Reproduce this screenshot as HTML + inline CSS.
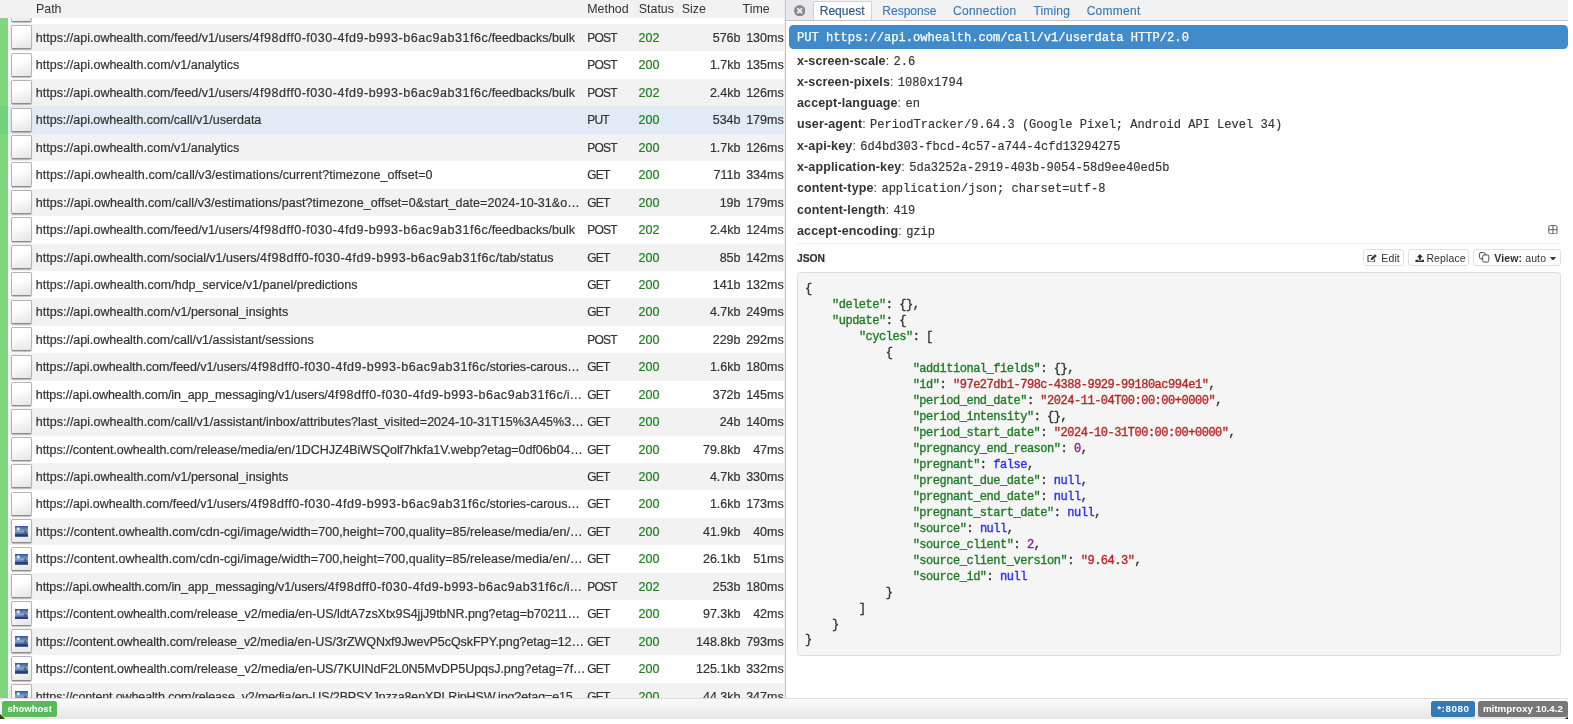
<!DOCTYPE html>
<html lang="en"><head><meta charset="utf-8"><title>mitmproxy</title>
<style>
*{box-sizing:border-box}
html,body{margin:0;padding:0}
body{width:1573px;height:724px;overflow:hidden;background:#fff;font-family:"Liberation Sans",sans-serif;color:#333;position:relative}
#app{position:absolute;left:0;top:0;width:1568.3px;height:718.8px;overflow:hidden;background:#fff;will-change:transform;transform:translateZ(0)}
#left{position:absolute;left:0;top:0;width:784.4px;height:698.6px;overflow:hidden;background:#fff}
#thead{position:absolute;left:0;top:0;width:100%;height:17.8px;background:#f2f2f2;font-size:12.4px;line-height:17.8px;z-index:3}
#thead span{position:absolute;top:1px;white-space:nowrap}
#rows{position:absolute;left:0;top:-3.44px;width:100%;-webkit-text-stroke:.2px}
.r{position:relative;height:27.44px;width:100%;border-left:8px solid #7ed67e;font-size:12.5px;line-height:27.44px;white-space:nowrap;background:#fff}
.r.g{background:#f2f2f2}
.r.sel{background:#e0ebf5;border-left-color:#72d17c}
.r>*{position:absolute;top:1px}
.ic{left:3.2px;top:1.3px!important;width:20.5px;height:24.2px;border:1px solid #b4b4b4;border-bottom-color:#8c8c8c;border-radius:2px;background:linear-gradient(160deg,#fff 0%,#fff 35%,#e4e4e4 100%);box-shadow:0 1px 1px rgba(0,0,0,.25)}
.pic{position:absolute;left:2.4px;top:6.1px;width:13.8px;height:10.8px;display:block}
.p{left:27.8px;width:552px;overflow:hidden}
.p u{text-decoration:none;letter-spacing:.53px}
.m{left:579.2px;font-size:12px;letter-spacing:-.75px}
.s{left:630.6px;color:#1b7d1b}
.z{right:43.9px;text-align:right}
.t{right:.7px;text-align:right}
#split{position:absolute;left:784px;top:0;width:3px;height:698.6px;background:linear-gradient(90deg,#f0f0f0 0,#f0f0f0 33.3%,#c4c4c4 33.3%,#c4c4c4 66.6%,#ededed 66.6%)}
#right{position:absolute;left:786px;top:0;width:782.3px;height:698.6px;background:#fff;overflow:hidden}
#nav{position:absolute;left:0;top:0;width:100%;height:20.9px;background:#f2f2f2;border-bottom:1px solid #c4c4c4;font-size:12px;line-height:16px}
#nav span{position:absolute;top:2.6px;color:#3a7ab8;white-space:nowrap;-webkit-text-stroke:.15px}
#cbg{position:absolute;left:0;top:0;width:27.2px;height:20px;background:#e9e9ed}
#nav .act{top:1.3px;left:27.2px;width:58.8px;height:18.7px;background:#fff;border:1px solid #d0d0d0;border-bottom:none;border-radius:1.5px 1.5px 0 0;color:#2c557f;padding:.3px 0 0 5.6px}
#close{position:absolute;left:8px;top:5.1px;width:11.4px;height:11.4px}
#first{position:absolute;left:2.9px;top:25.1px;width:779.4px;height:24px;background:#428bca;border-radius:4.5px;color:#fff;font:12.1px/24px "Liberation Mono",monospace;padding:.9px 0 0 8.1px;white-space:pre;-webkit-text-stroke:.25px}
.h{position:absolute;left:11px;white-space:nowrap;font-size:12.5px;line-height:20px;height:20px}
.h b{letter-spacing:.13px}
.h i{font:normal 12.05px "Liberation Mono",monospace;margin-left:.9px;-webkit-text-stroke:.15px}
#plus{position:absolute;left:762.3px;top:224.7px;width:9.8px;height:9.4px}
#hr{position:absolute;left:11px;top:243px;width:764.3px;height:1px;background:#eee}
#json{position:absolute;left:11px;top:250.8px;font-size:10.3px;line-height:16px;font-weight:bold;-webkit-text-stroke:.2px}
.btn{position:absolute;top:248.8px;height:17.6px;letter-spacing:.12px;border:1px solid #e0e0e0;border-radius:3px;background:#fff;font-size:10.5px;line-height:17.6px;white-space:nowrap;color:#333}
.btn svg{position:absolute}
.btn span{position:absolute;top:-.2px}
#pre{position:absolute;left:10.6px;top:272.2px;width:764.7px;height:383.4px;background:#f5f5f5;border:1px solid #dcdcdc;border-radius:3.5px;margin:0;padding:9.3px 0 0 7.5px;-webkit-text-stroke:.35px;letter-spacing:-.48px;font:12px/15.95px "Liberation Mono",monospace;color:#333;white-space:pre;overflow:hidden}
#pre .k{color:#1f7a26}
#pre .st{color:#b42828}
#pre .n{color:#86208f}
#pre .kw{color:#2b2bff}
#foot{position:absolute;left:0;top:698px;width:100%;height:20.8px;background:linear-gradient(#fafafa,#e6e6e6);border-top:1px solid #dedede}
.lab{position:absolute;top:2.4px;height:15.5px;border-radius:2.5px;color:#fff;font-weight:bold;font-size:9.8px;line-height:15.5px;text-align:center;white-space:nowrap}
</style></head>
<body>
<div id="app">
<svg width="0" height="0" style="position:absolute"><defs><linearGradient id="sky" x1="0" y1="0" x2="0" y2="1"><stop offset="0" stop-color="#2f55a0"/><stop offset=".5" stop-color="#8aa6cf"/><stop offset=".7" stop-color="#5674a8"/><stop offset=".8" stop-color="#1f3c78"/><stop offset="1" stop-color="#27437e"/></linearGradient></defs></svg>
<div id="left">
<div id="thead"><span style="left:36px">Path</span><span style="left:587.3px">Method</span><span style="left:638.8px">Status</span><span style="left:681.8px">Size</span><span style="left:742.6px">Time</span></div>
<div id="rows">
<div class="r"><div class="ic"></div></div>
<div class="r g"><div class="ic"></div><div class="p" style="letter-spacing:-0.003px">https://api.owhealth.com/feed/v1/users/<u>4f98dff0-f030-4fd9-b993-b6ac9ab31f6c</u>/feedbacks/bulk</div><div class="m">POST</div><div class="s">202</div><div class="z">576b</div><div class="t">130ms</div></div>
<div class="r"><div class="ic"></div><div class="p" style="letter-spacing:-0.002px">https://api.owhealth.com/v1/analytics</div><div class="m">POST</div><div class="s">200</div><div class="z">1.7kb</div><div class="t">135ms</div></div>
<div class="r g"><div class="ic"></div><div class="p" style="letter-spacing:-0.003px">https://api.owhealth.com/feed/v1/users/<u>4f98dff0-f030-4fd9-b993-b6ac9ab31f6c</u>/feedbacks/bulk</div><div class="m">POST</div><div class="s">202</div><div class="z">2.4kb</div><div class="t">126ms</div></div>
<div class="r sel"><div class="ic"></div><div class="p" style="letter-spacing:-0.008px">https://api.owhealth.com/call/v1/userdata</div><div class="m">PUT</div><div class="s">200</div><div class="z">534b</div><div class="t">179ms</div></div>
<div class="r g"><div class="ic"></div><div class="p" style="letter-spacing:-0.002px">https://api.owhealth.com/v1/analytics</div><div class="m">POST</div><div class="s">200</div><div class="z">1.7kb</div><div class="t">126ms</div></div>
<div class="r"><div class="ic"></div><div class="p" style="letter-spacing:0.069px">https://api.owhealth.com/call/v3/estimations/current?timezone_offset=0</div><div class="m">GET</div><div class="s">200</div><div class="z">711b</div><div class="t">334ms</div></div>
<div class="r g"><div class="ic"></div><div class="p" style="letter-spacing:0.047px">https://api.owhealth.com/call/v3/estimations/past?timezone_offset=0&amp;start_date=2024-10-31&amp;o…</div><div class="m">GET</div><div class="s">200</div><div class="z">19b</div><div class="t">179ms</div></div>
<div class="r"><div class="ic"></div><div class="p" style="letter-spacing:-0.003px">https://api.owhealth.com/feed/v1/users/<u>4f98dff0-f030-4fd9-b993-b6ac9ab31f6c</u>/feedbacks/bulk</div><div class="m">POST</div><div class="s">202</div><div class="z">2.4kb</div><div class="t">124ms</div></div>
<div class="r g"><div class="ic"></div><div class="p" style="letter-spacing:-0.004px">https://api.owhealth.com/social/v1/users/<u>4f98dff0-f030-4fd9-b993-b6ac9ab31f6c</u>/tab/status</div><div class="m">GET</div><div class="s">200</div><div class="z">85b</div><div class="t">142ms</div></div>
<div class="r"><div class="ic"></div><div class="p" style="letter-spacing:0.024px">https://api.owhealth.com/hdp_service/v1/panel/predictions</div><div class="m">GET</div><div class="s">200</div><div class="z">141b</div><div class="t">132ms</div></div>
<div class="r g"><div class="ic"></div><div class="p" style="letter-spacing:0.006px">https://api.owhealth.com/v1/personal_insights</div><div class="m">GET</div><div class="s">200</div><div class="z">4.7kb</div><div class="t">249ms</div></div>
<div class="r"><div class="ic"></div><div class="p" style="letter-spacing:-0.014px">https://api.owhealth.com/call/v1/assistant/sessions</div><div class="m">POST</div><div class="s">200</div><div class="z">229b</div><div class="t">292ms</div></div>
<div class="r g"><div class="ic"></div><div class="p" style="letter-spacing:-0.054px">https://api.owhealth.com/feed/v1/users/<u>4f98dff0-f030-4fd9-b993-b6ac9ab31f6c</u>/stories-carous…</div><div class="m">GET</div><div class="s">200</div><div class="z">1.6kb</div><div class="t">180ms</div></div>
<div class="r"><div class="ic"></div><div class="p" style="letter-spacing:-0.109px">https://api.owhealth.com/in_app_messaging/v1/users/<u>4f98dff0-f030-4fd9-b993-b6ac9ab31f6c</u>/i…</div><div class="m">GET</div><div class="s">200</div><div class="z">372b</div><div class="t">145ms</div></div>
<div class="r g"><div class="ic"></div><div class="p" style="letter-spacing:0.007px">https://api.owhealth.com/call/v1/assistant/inbox/attributes?last_visited=2024-10-31T15%3A45%3…</div><div class="m">GET</div><div class="s">200</div><div class="z">24b</div><div class="t">140ms</div></div>
<div class="r"><div class="ic"></div><div class="p" style="letter-spacing:-0.062px">https://content.owhealth.com/release/media/en/1DCHJZ4BiWSQolf7hkfa1V.webp?etag=0df06b04…</div><div class="m">GET</div><div class="s">200</div><div class="z">79.8kb</div><div class="t">47ms</div></div>
<div class="r g"><div class="ic"></div><div class="p" style="letter-spacing:0.006px">https://api.owhealth.com/v1/personal_insights</div><div class="m">GET</div><div class="s">200</div><div class="z">4.7kb</div><div class="t">330ms</div></div>
<div class="r"><div class="ic"></div><div class="p" style="letter-spacing:-0.054px">https://api.owhealth.com/feed/v1/users/<u>4f98dff0-f030-4fd9-b993-b6ac9ab31f6c</u>/stories-carous…</div><div class="m">GET</div><div class="s">200</div><div class="z">1.6kb</div><div class="t">173ms</div></div>
<div class="r g"><div class="ic"><svg class="pic" viewBox="0 0 14 11" preserveAspectRatio="none"><rect width="14" height="11" fill="url(#sky)"/><circle cx="3.3" cy="2.9" r="1.6" fill="#e9e8b8"/><path d="M8.1 7.7 L10.7 3.7 L12.5 7.7 Z" fill="#555a66"/></svg></div><div class="p" style="letter-spacing:0.041px">https://content.owhealth.com/cdn-cgi/image/width=700,height=700,quality=85/release/media/en/…</div><div class="m">GET</div><div class="s">200</div><div class="z">41.9kb</div><div class="t">40ms</div></div>
<div class="r"><div class="ic"><svg class="pic" viewBox="0 0 14 11" preserveAspectRatio="none"><rect width="14" height="11" fill="url(#sky)"/><circle cx="3.3" cy="2.9" r="1.6" fill="#e9e8b8"/><path d="M8.1 7.7 L10.7 3.7 L12.5 7.7 Z" fill="#555a66"/></svg></div><div class="p" style="letter-spacing:0.041px">https://content.owhealth.com/cdn-cgi/image/width=700,height=700,quality=85/release/media/en/…</div><div class="m">GET</div><div class="s">200</div><div class="z">26.1kb</div><div class="t">51ms</div></div>
<div class="r g"><div class="ic"></div><div class="p" style="letter-spacing:-0.107px">https://api.owhealth.com/in_app_messaging/v1/users/<u>4f98dff0-f030-4fd9-b993-b6ac9ab31f6c</u>/i…</div><div class="m">POST</div><div class="s">202</div><div class="z">253b</div><div class="t">180ms</div></div>
<div class="r"><div class="ic"><svg class="pic" viewBox="0 0 14 11" preserveAspectRatio="none"><rect width="14" height="11" fill="url(#sky)"/><circle cx="3.3" cy="2.9" r="1.6" fill="#e9e8b8"/><path d="M8.1 7.7 L10.7 3.7 L12.5 7.7 Z" fill="#555a66"/></svg></div><div class="p" style="letter-spacing:-0.048px">https://content.owhealth.com/release_v2/media/en-US/ldtA7zsXtx9S4jjJ9tbNR.png?etag=b70211…</div><div class="m">GET</div><div class="s">200</div><div class="z">97.3kb</div><div class="t">42ms</div></div>
<div class="r g"><div class="ic"><svg class="pic" viewBox="0 0 14 11" preserveAspectRatio="none"><rect width="14" height="11" fill="url(#sky)"/><circle cx="3.3" cy="2.9" r="1.6" fill="#e9e8b8"/><path d="M8.1 7.7 L10.7 3.7 L12.5 7.7 Z" fill="#555a66"/></svg></div><div class="p" style="letter-spacing:-0.066px">https://content.owhealth.com/release_v2/media/en-US/3rZWQNxf9JwevP5cQskFPY.png?etag=12…</div><div class="m">GET</div><div class="s">200</div><div class="z">148.8kb</div><div class="t">793ms</div></div>
<div class="r"><div class="ic"><svg class="pic" viewBox="0 0 14 11" preserveAspectRatio="none"><rect width="14" height="11" fill="url(#sky)"/><circle cx="3.3" cy="2.9" r="1.6" fill="#e9e8b8"/><path d="M8.1 7.7 L10.7 3.7 L12.5 7.7 Z" fill="#555a66"/></svg></div><div class="p" style="letter-spacing:-0.050px">https://content.owhealth.com/release_v2/media/en-US/7KUINdF2L0N5MvDP5UpqsJ.png?etag=7f…</div><div class="m">GET</div><div class="s">200</div><div class="z">125.1kb</div><div class="t">332ms</div></div>
<div class="r g"><div class="ic"><svg class="pic" viewBox="0 0 14 11" preserveAspectRatio="none"><rect width="14" height="11" fill="url(#sky)"/><circle cx="3.3" cy="2.9" r="1.6" fill="#e9e8b8"/><path d="M8.1 7.7 L10.7 3.7 L12.5 7.7 Z" fill="#555a66"/></svg></div><div class="p" style="letter-spacing:-0.127px">https://content.owhealth.com/release_v2/media/en-US/2BPSYJpzza8enXPLRipHSW.jpg?etag=e15…</div><div class="m">GET</div><div class="s">200</div><div class="z">44.3kb</div><div class="t">347ms</div></div>
</div>
</div>
<div id="split"></div>
<div id="right">
<div id="nav"><div id="cbg"></div><svg id="close" viewBox="0 0 11.4 11.4"><circle cx="5.7" cy="5.7" r="5.7" fill="#8a8a8a"/><path d="M3.9 3.9 L7.5 7.5 M7.5 3.9 L3.9 7.5" stroke="#ececee" stroke-width="2" stroke-linecap="round"/></svg><span class="act">Request</span><span style="left:96.3px">Response</span><span style="left:167.1px;letter-spacing:.25px">Connection</span><span style="left:247.5px;letter-spacing:.15px">Timing</span><span style="left:300.7px;letter-spacing:.27px">Comment</span></div>
<div id="first">PUT https://api.owhealth.com/call/v1/userdata HTTP/2.0</div>
<div class="h" style="top:50.6px"><b>x-screen-scale</b>: <i>2.6</i></div>
<div class="h" style="top:71.9px"><b>x-screen-pixels</b>: <i>1080x1794</i></div>
<div class="h" style="top:93.2px"><b>accept-language</b>: <i>en</i></div>
<div class="h" style="top:114.4px"><b>user-agent</b>: <i>PeriodTracker/9.64.3 (Google Pixel; Android API Level 34)</i></div>
<div class="h" style="top:135.7px"><b>x-api-key</b>: <i>6d4bd303-fbcd-4c57-a744-4cfd13294275</i></div>
<div class="h" style="top:157.0px"><b>x-application-key</b>: <i>5da3252a-2919-403b-9054-58d9ee40ed5b</i></div>
<div class="h" style="top:178.2px"><b>content-type</b>: <i>application/json; charset=utf-8</i></div>
<div class="h" style="top:199.5px"><b>content-length</b>: <i>419</i></div>
<div class="h" style="top:220.8px"><b>accept-encoding</b>: <i>gzip</i></div>
<svg id="plus" viewBox="0 0 10 10"><rect x=".6" y=".6" width="8.8" height="8.8" rx="1.5" fill="none" stroke="#555" stroke-width="1"/><path d="M5 .6V9.4M.6 5H9.4" stroke="#555" stroke-width="1"/></svg>
<div id="hr"></div>
<div id="json">JSON</div>
<div class="btn" style="left:577.3px;width:41.2px"><svg style="left:3.2px;top:3.9px" width="10.4" height="8.6" viewBox="0 0 10 9"><path d="M7.4 5.4V7.4a.9.9 0 0 1-.9.9H1.5a.9.9 0 0 1-.9-.9V2.4a.9.9 0 0 1 .9-.9H4.8" fill="none" stroke="#3a3a3a" stroke-width="1.15"/><path d="M3.3 6.4l.5-2.2L7.9 .2l1.9 1.8L5.6 6z" fill="#3a3a3a"/></svg><span style="left:17px">Edit</span></div>
<div class="btn" style="left:621.7px;width:61.6px"><svg style="left:5.9px;top:3.9px" width="9.8" height="8.6" viewBox="0 0 10 9"><path d="M5 0L8.2 3.4H6.2V6H3.8V3.4H1.8z" fill="#333"/><path d="M.3 6h2.6v.9h4.2V6h2.6v2.7H.3z" fill="#333"/></svg><span style="left:17.7px">Replace</span></div>
<div class="btn" style="left:686.8px;width:88.7px"><svg style="left:5px;top:2.6px" width="10.8" height="10.8" viewBox="0 0 11 11"><rect x=".6" y=".6" width="5.6" height="6.4" rx="1.4" fill="none" stroke="#444" stroke-width="1"/><rect x="3.8" y="3" width="6.2" height="7.2" rx="1.4" fill="#fff" stroke="#444" stroke-width="1"/></svg><span style="left:20.5px"><b>View:</b> auto</span><svg style="left:75.9px;top:7px" width="6" height="3.5" viewBox="0 0 6 3.5"><path d="M0 0H6L3 3.5z" fill="#333"/></svg></div>
<pre id="pre">{
    <span class="k">"delete"</span>: {},
    <span class="k">"update"</span>: {
        <span class="k">"cycles"</span>: [
            {
                <span class="k">"additional_fields"</span>: {},
                <span class="k">"id"</span>: <span class="st">"97e27db1-798c-4388-9929-99180ac994e1"</span>,
                <span class="k">"period_end_date"</span>: <span class="st">"2024-11-04T00:00:00+0000"</span>,
                <span class="k">"period_intensity"</span>: {},
                <span class="k">"period_start_date"</span>: <span class="st">"2024-10-31T00:00:00+0000"</span>,
                <span class="k">"pregnancy_end_reason"</span>: <span class="n">0</span>,
                <span class="k">"pregnant"</span>: <span class="kw">false</span>,
                <span class="k">"pregnant_due_date"</span>: <span class="kw">null</span>,
                <span class="k">"pregnant_end_date"</span>: <span class="kw">null</span>,
                <span class="k">"pregnant_start_date"</span>: <span class="kw">null</span>,
                <span class="k">"source"</span>: <span class="kw">null</span>,
                <span class="k">"source_client"</span>: <span class="n">2</span>,
                <span class="k">"source_client_version"</span>: <span class="st">"9.64.3"</span>,
                <span class="k">"source_id"</span>: <span class="kw">null</span>
            }
        ]
    }
}</pre>
</div>
<div id="foot"><div class="lab" style="left:2.1px;width:55.1px;background:#5cb85c;font-size:9.5px">showhost</div><div class="lab" style="left:1431.1px;width:44px;background:#337ab7;letter-spacing:.6px;text-indent:.6px">*:8080</div><div class="lab" style="left:1477.6px;width:90.7px;background:#777">mitmproxy 10.4.2</div></div>
<svg style="position:absolute;left:0;top:713px;width:6px;height:6px" viewBox="0 0 6 6"><path d="M0 1L5 5.9H0z" fill="#3b3a0c"/></svg><svg style="position:absolute;left:1564.3px;top:716px;width:4px;height:3px" viewBox="0 0 4 3"><path d="M4 .6L4 2.9H.8z" fill="#2a2616"/></svg>
</div>
</body></html>
